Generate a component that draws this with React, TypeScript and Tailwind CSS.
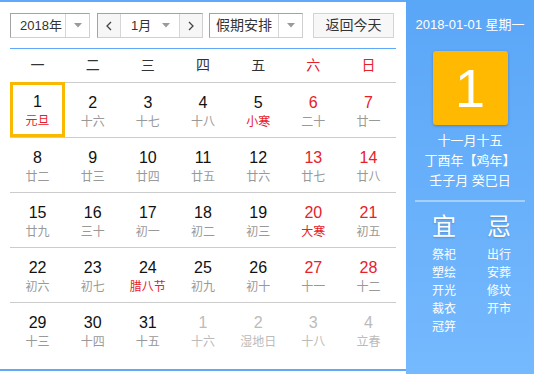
import React from "react";

type Cell = { d: number; l: string; hol?: boolean; other?: boolean };

const cells: Cell[] = [
  { d: 1, l: "元旦", hol: true }, { d: 2, l: "十六" }, { d: 3, l: "十七" }, { d: 4, l: "十八" }, { d: 5, l: "小寒", hol: true }, { d: 6, l: "二十" }, { d: 7, l: "廿一" },
  { d: 8, l: "廿二" }, { d: 9, l: "廿三" }, { d: 10, l: "廿四" }, { d: 11, l: "廿五" }, { d: 12, l: "廿六" }, { d: 13, l: "廿七" }, { d: 14, l: "廿八" },
  { d: 15, l: "廿九" }, { d: 16, l: "三十" }, { d: 17, l: "初一" }, { d: 18, l: "初二" }, { d: 19, l: "初三" }, { d: 20, l: "大寒", hol: true }, { d: 21, l: "初五" },
  { d: 22, l: "初六" }, { d: 23, l: "初七" }, { d: 24, l: "腊八节", hol: true }, { d: 25, l: "初九" }, { d: 26, l: "初十" }, { d: 27, l: "十一" }, { d: 28, l: "十二" },
  { d: 29, l: "十三" }, { d: 30, l: "十四" }, { d: 31, l: "十五" }, { d: 1, l: "十六", other: true }, { d: 2, l: "湿地日", other: true }, { d: 3, l: "十八", other: true }, { d: 4, l: "立春", other: true },
];

const weeks = ["一", "二", "三", "四", "五", "六", "日"];

const Tri = () => (
  <svg width="8" height="5" viewBox="0 0 8 5"><polygon points="0,0 8,0 4,4.5" fill="#9a9a9a" /></svg>
);

const Chev = ({ dir }: { dir: "l" | "r" }) => (
  <svg width="6" height="10" viewBox="0 0 6 10">
    <polyline points={dir === "l" ? "5,1 1,5 5,9" : "1,1 5,5 1,9"} fill="none" stroke="#444" strokeWidth="1.3" />
  </svg>
);

export default function App() {
  const rows: Cell[][] = [];
  for (let i = 0; i < 5; i++) rows.push(cells.slice(i * 7, i * 7 + 7));
  return (
    <div className="flex w-[534px] h-[374px] overflow-hidden bg-white text-[#333]" style={{ fontFamily: '"Liberation Sans", "Noto Sans CJK SC", sans-serif' }}>
      <div className="w-[406px] h-[371px] shrink-0 border-t-2 border-b-2 border-[#5ea9f8] px-[10px] pt-[11px] flex flex-col">
        <div className="flex h-[25px] items-stretch text-[13px]">
          <div className="w-[80px] flex border border-[#cfcfcf] border-t-[#a3a3a3] border-l-[#a3a3a3]">
            <div className="flex-1 flex items-center pl-[9px]">2018年</div>
            <div className="w-[24px] flex items-center justify-center border-l border-[#d6d6d6]"><Tri /></div>
          </div>
          <div className="w-[106px] ml-[7px] flex border border-[#cfcfcf] border-t-[#a3a3a3] border-l-[#a3a3a3]">
            <div className="w-[22px] flex items-center justify-center bg-[#f6f6f6]"><Chev dir="l" /></div>
            <div className="w-[60px] flex items-center border-l border-r border-[#d6d6d6]">
              <span className="pl-[10px] flex-1">1月</span>
              <span className="pr-[9px] flex items-center"><Tri /></span>
            </div>
            <div className="flex-1 flex items-center justify-center bg-[#f6f6f6]"><Chev dir="r" /></div>
          </div>
          <div className="w-[94px] ml-[6px] flex border border-[#cfcfcf] border-t-[#a3a3a3] border-l-[#a3a3a3]">
            <div className="flex-1 flex items-center justify-center text-[14px]">假期安排</div>
            <div className="w-[24px] flex items-center justify-center border-l border-[#d6d6d6]"><Tri /></div>
          </div>
          <div className="w-[81px] ml-[10px] flex items-center justify-center border border-[#d4d4d4] bg-[#f7f7f7] text-[14px]">返回今天</div>
        </div>
        <div className="mt-[10px] h-px bg-[#5ea9f8]" />
        <div className="grid grid-cols-7 h-[33px] items-center text-[14px]">
          {weeks.map((w, i) => (
            <div key={w} className={`text-center ${i >= 5 ? "text-[#e6212a]" : "text-[#333]"}`}>{w}</div>
          ))}
        </div>
        {rows.map((r, ri) => (
          <div key={ri} className="grid grid-cols-7 h-[55px] border-t border-[#cccccc]">
            {r.map((c, ci) => {
              const sel = ri === 0 && ci === 0;
              const numCls = c.other ? "text-[#bbbbbb]" : ci >= 5 ? "text-[#e6212a]" : "text-[#111]";
              const lunCls = c.other ? "text-[#bbbbbb]" : c.hol ? "text-[#e6212a]" : "text-[#999]";
              return (
                <div key={ci} className={`flex flex-col items-center ${sel ? "border-[3px] border-[#fbb800] -mt-px h-[55px] pt-[7px]" : "pt-[10px]"}`}>
                  <div className={`text-[16px] leading-[20px] ${numCls}`}>{c.d}</div>
                  <div className={`text-[12px] leading-[16px] mt-px ${lunCls}`}>{c.l}</div>
                </div>
              );
            })}
          </div>
        ))}
      </div>
      <div className="w-[128px] h-[374px] shrink-0 bg-gradient-to-b from-[#5aa6f7] to-[#75b9fe] text-white flex flex-col items-center">
        <div className="mt-[16px] text-[13px] leading-[18px]">2018-01-01 星期一</div>
        <div className="mt-[17px] w-[75px] h-[74px] rounded-[3px] bg-[#ffb900] shadow-[0_1px_3px_rgba(0,0,0,0.25)] flex items-center justify-center text-[54px] leading-none">1</div>
        <div className="mt-[6px] text-[13px] leading-[20px] text-center">
          <div>十一月十五</div>
          <div>丁酉年【鸡年】</div>
          <div>壬子月 癸巳日</div>
        </div>
        <div className="mt-[9px] w-[110px] h-[2px] bg-[#a6d0fb]" />
        <div className="mt-[13px] flex pl-[3px]">
          <div className="w-[55px] flex flex-col items-center">
            <div className="text-[24px] leading-[24px] [text-shadow:0_1px_2px_rgba(0,0,0,0.2)]">宜</div>
            <div className="mt-[7px] text-[12px] leading-[18px] flex flex-col items-center">
              <div>祭祀</div><div>塑绘</div><div>开光</div><div>裁衣</div><div>冠笄</div>
            </div>
          </div>
          <div className="w-[55px] flex flex-col items-center">
            <div className="text-[24px] leading-[24px] [text-shadow:0_1px_2px_rgba(0,0,0,0.2)]">忌</div>
            <div className="mt-[7px] text-[12px] leading-[18px] flex flex-col items-center">
              <div>出行</div><div>安葬</div><div>修坟</div><div>开市</div>
            </div>
          </div>
        </div>
      </div>
    </div>
  );
}
